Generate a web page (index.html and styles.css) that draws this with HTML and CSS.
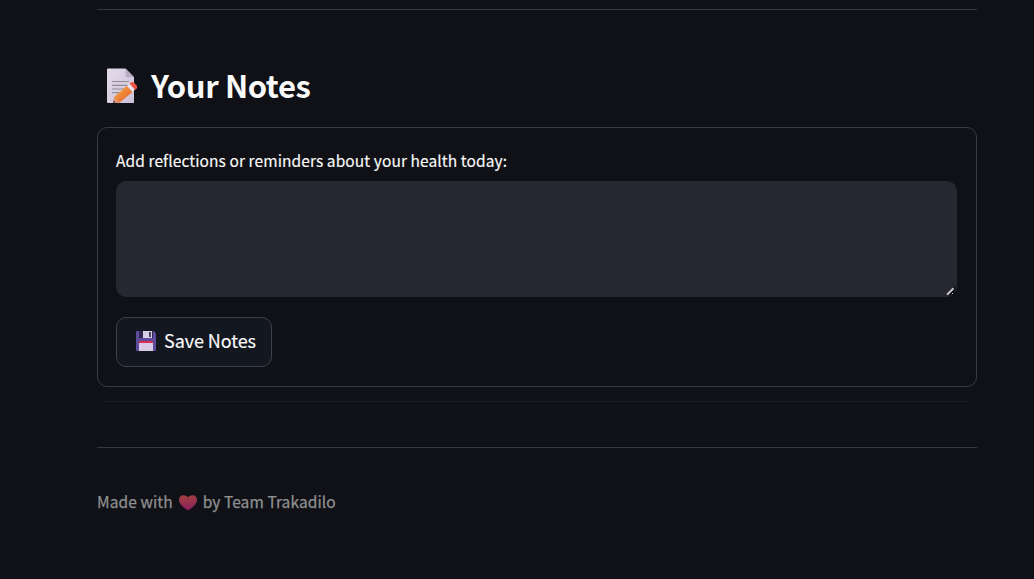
FILE: index.html
```html
<!DOCTYPE html>
<html lang="en">
<head>
    <meta charset="UTF-8">
    <meta name="viewport" content="width=device-width, initial-scale=1.0">
    <title>Trakadilo</title>
    <link rel="stylesheet" href="styles.css">
</head>
<body>

    <div class="container">
        <hr class="divider">

        <!-- Heading -->
        <h2 class="heading">
            <svg class="memo-icon" width="32" height="36" viewBox="0 0 32 36">
                <defs>
                    <linearGradient id="paper" x1="0" y1="0" x2="1" y2="1">
                        <stop offset="0" stop-color="#e3dbea"/>
                        <stop offset="1" stop-color="#cdc1d9"/>
                    </linearGradient>
                    <linearGradient id="pencil" x1="0" y1="0" x2="1" y2="1">
                        <stop offset="0.3" stop-color="#f5993f"/>
                        <stop offset="0.8" stop-color="#e4682f"/>
                    </linearGradient>
                </defs>
                <path d="M1 0.5h18.500l8.500 8.500v26H2a1 1 0 0 1-1-1V1.500a1 1 0 0 1 1-1z" fill="url(#paper)"/>
                <path d="M19.500 0.500l8.500 8.800h-7a1.500 1.500 0 0 1-1.500-1.500z" fill="#b9adc4"/>
                <path d="M6 13.500h17M6 17.300h17M6 21h14M6 24.700h10" stroke="#918b98" stroke-width="1.200"/>
                <path d="M7 34.800l1.300-6L21 17.800l5.800 6L13 35z" fill="url(#pencil)"/>
                <path d="M7 34.900l1.200-5.500 5.300 5.200z" fill="#d99b78"/>
                <path d="M7 34.900l.6-2.400 2.100 2z" fill="#5b3d5c"/>
                <path d="M21 17.800l2.500-2.200 5.500 6-2.500 2.300z" fill="#e9e2ef"/>
                <path d="M23.500 15.600l1.500-1.200q1.800-.9 3.400.7l2.200 2.400q1.400 1.800 0 3.200L29 21.700z" fill="#f1553f"/>
            </svg>
            <span class="heading-text">Your Notes</span>
        </h2>

        <!-- Notes form -->
        <form class="notes-form">
            <label class="notes-label" for="notes">Add reflections or reminders about your health today:</label>
            <div class="textarea-wrap">
                <textarea id="notes" class="notes-input"></textarea>
                <svg class="grip" width="12" height="11" viewBox="0 0 12 11">
                    <path d="M0.500 8.500L8 1H10.500v7L9 9.500H1.500z" fill="#101116"/>
                    <path d="M2 8.700l6.500-6.500" stroke="#c9c9cc" stroke-width="2"/>
                    <path d="M7 7h1v1h-1z" fill="#c9c9cc"/>
                </svg>
            </div>
            <button class="save-button" type="button">
                <svg class="floppy-icon" width="20" height="20" viewBox="0 0 20 20">
                    <path d="M1 0h16.800L20 2.500V19a1 1 0 0 1-1 1H1a1 1 0 0 1-1-1V1a1 1 0 0 1 1-1z" fill="#5d4b9b"/>
                    <path d="M3 0h14v7H3z" fill="#30294f"/>
                    <path d="M7 0h9v7H7z" fill="#d9cfe4"/>
                    <path d="M13 1h2v5h-2z" fill="#4a4164"/>
                    <path d="M3 11h14v9H3z" fill="#d9cbe7"/>
                    <path d="M3 10h14v2H3z" fill="#d92c57"/>
                </svg>
                <span>Save Notes</span>
            </button>
        </form>

        <hr class="faint-line">
        <hr class="divider">

        <!-- Footer -->
        <p class="footer">
            <span class="made-with">Made with</span>
            <svg class="heart-icon" width="18" height="16" viewBox="0 0 18 16">
                <defs>
                    <linearGradient id="heart" x1="0.4" y1="0" x2="0.5" y2="1">
                        <stop offset="0" stop-color="#a0423e"/>
                        <stop offset="0.5" stop-color="#992f4e"/>
                        <stop offset="1" stop-color="#892060"/>
                    </linearGradient>
                </defs>
                <path d="M9 15.500C6 13.500 0 9.500 0 4.900C0 2 2 .3 4.600 .3C6.600 .3 8.200 1.300 9 2.300C9.800 1.300 11.400 .3 13.400 .3C16 .3 18 2 18 4.900C18 9.500 12 13.500 9 15.500z" fill="url(#heart)"/>
            </svg>
            <span class="team">by Team Trakadilo</span>
        </p>
    </div>

</body>
</html>
```

FILE: styles.css
```css
* {
    box-sizing: border-box;
}

body {
    margin: 0;
    background-color: #0f1116;
    color: #fafafa;
    font-family: "Source Sans Pro", "Noto Sans CJK SC", sans-serif;
}

.container {
    width: 880px;
    margin-left: 97px;
    padding-top: 9px;
}

.divider {
    height: 1px;
    margin: 0;
    border: none;
    background-color: #37383d;
}

/* Heading */
.heading {
    display: flex;
    align-items: center;
    gap: 13px;
    height: 40px;
    margin: 56px 0 21px;
    padding-left: 9px;
    font-size: 31px;
    font-weight: 700;
    line-height: 40px;
}

.heading-text {
    padding-bottom: 2px;
    letter-spacing: -0.4px;
}

/* Notes form */
.notes-form {
    display: flex;
    flex-direction: column;
    align-items: flex-start;
    height: 260px;
    padding: 20px 19px 0 18px;
    border: 1px solid #3a3b40;
    border-radius: 10px;
}

.notes-label {
    height: 24px;
    font-size: 15.5px;
    line-height: 24px;
    letter-spacing: 0.09px;
    -webkit-text-stroke: 0.15px;
    white-space: nowrap;
}

.textarea-wrap {
    position: relative;
    width: 841px;
    height: 116px;
    margin-top: 9px;
}

.notes-input {
    display: block;
    width: 100%;
    height: 100%;
    border: none;
    border-radius: 10px;
    background-color: #262730;
    color: #fafafa;
    resize: none;
}

.grip {
    position: absolute;
    right: 0;
    bottom: 0;
}

.save-button {
    display: flex;
    align-items: center;
    gap: 8px;
    width: 156px;
    height: 50px;
    margin-top: 20px;
    padding: 0 0 2px 19px;
    border: 1px solid #3f4148;
    border-radius: 10px;
    background-color: #131720;
    color: #fafafa;
    font-family: inherit;
    font-size: 18px;
    letter-spacing: -0.08px;
    -webkit-text-stroke: 0.15px;
    white-space: nowrap;
}

.save-button span {
    padding-bottom: 2px;
}

/* Footer */
.faint-line {
    height: 1px;
    margin: 14px 9px 45px 7px;
    border: none;
    background-color: #1b1c21;
}

.footer {
    display: flex;
    align-items: center;
    height: 24px;
    margin: 42px 0 0;
    color: #8f9092;
    font-size: 15.5px;
    line-height: 24px;
    letter-spacing: 0.08px;
    -webkit-text-stroke: 0.25px;
    white-space: nowrap;
}

.footer span {
    padding-bottom: 2px;
}

.heart-icon {
    margin: 1px 6px 0 6px;
}
```
